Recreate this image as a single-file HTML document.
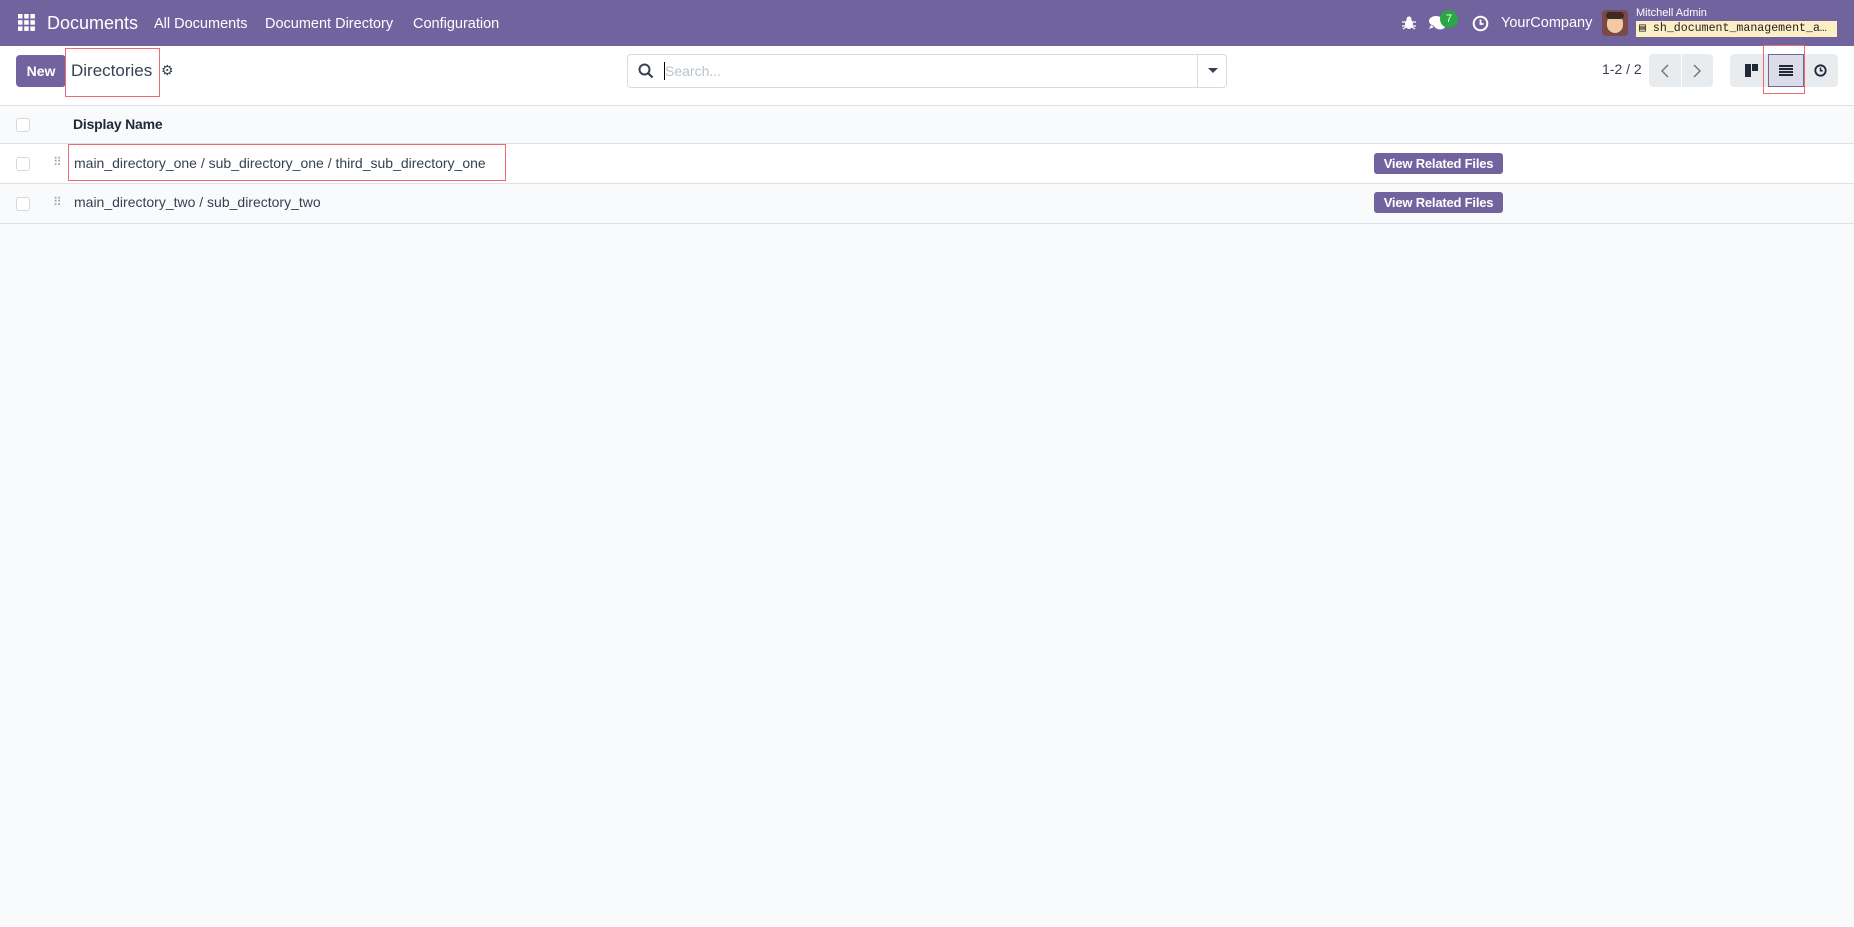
<!DOCTYPE html>
<html><head><meta charset="utf-8"><style>
*{box-sizing:border-box;margin:0;padding:0}
body{width:1854px;height:927px;background:#f9fafb;font-family:"Liberation Sans",sans-serif;color:#374151;position:relative;overflow:hidden}
.a{position:absolute;white-space:nowrap}
.nav{position:absolute;left:0;top:0;width:1854px;height:46px;background:#71639e}
.nav .a{color:#fff}
.cp{position:absolute;left:0;top:46px;width:1854px;height:60px;background:#fff;border-bottom:1px solid #dee2e6}
.row{position:absolute;left:0;width:1854px;border-bottom:1px solid #dee2e6}
.cb{position:absolute;left:16px;width:14px;height:14px;border:1px solid #d5d8dc;border-radius:3px;background:#fff}
.btn{position:absolute;left:1374px;width:129px;height:21px;background:#71639e;color:#fff;border-radius:3px;font-size:13px;font-weight:bold;text-align:center;line-height:21px;letter-spacing:-0.2px}
.red{position:absolute;border:1.5px solid #f06a6f}
</style></head><body>
<div class="nav">
 <svg class="a" style="left:18px;top:14px" width="17" height="17" viewBox="0 0 17 17" fill="#fff"><rect x="0" y="0" width="4.5" height="4.5"/><rect x="6.2" y="0" width="4.5" height="4.5"/><rect x="12.4" y="0" width="4.5" height="4.5"/><rect x="0" y="6.2" width="4.5" height="4.5"/><rect x="6.2" y="6.2" width="4.5" height="4.5"/><rect x="12.4" y="6.2" width="4.5" height="4.5"/><rect x="0" y="12.4" width="4.5" height="4.5"/><rect x="6.2" y="12.4" width="4.5" height="4.5"/><rect x="12.4" y="12.4" width="4.5" height="4.5"/></svg>
 <div class="a" style="left:47px;top:13px;font-size:18px">Documents</div>
 <div class="a" style="left:154px;top:16px;font-size:14.5px">All Documents</div>
 <div class="a" style="left:265px;top:16px;font-size:14.5px">Document Directory</div>
 <div class="a" style="left:413px;top:16px;font-size:14.5px">Configuration</div>
 <svg class="a" style="left:1402px;top:16px" width="14" height="14" viewBox="0 0 14 14" fill="#fff"><ellipse cx="7" cy="8" rx="4" ry="5"/><circle cx="7" cy="3" r="2.5"/><path d="M0 6h14M0 10h14M1 13l3-2M13 13l-3-2" stroke="#fff" stroke-width="1.3"/></svg>
 <svg class="a" style="left:1428px;top:15px" width="20" height="17" viewBox="0 0 20 17" fill="#fff"><ellipse cx="8" cy="6" rx="7" ry="5"/><ellipse cx="12" cy="10" rx="6" ry="4.5"/><path d="M3 10l-2 4 5-2z"/></svg>
 <div class="a" style="left:1440px;top:10px;width:18px;height:18px;border-radius:9px;background:#28a745;color:#fff;font-size:11px;text-align:center;line-height:18px">7</div>
 <svg class="a" style="left:1472px;top:15px" width="17" height="17" viewBox="0 0 17 17"><circle cx="8.5" cy="8.5" r="6.8" fill="none" stroke="#fff" stroke-width="2"/><path d="M8.5 4.5v4.5h3" fill="none" stroke="#fff" stroke-width="1.8"/></svg>
 <div class="a" style="left:1501px;top:15px;font-size:14.5px">YourCompany</div>
 <div class="a" style="left:1602px;top:10px;width:26px;height:26px;border-radius:4px;background:#7a4a4a"><div style="position:absolute;left:5px;top:5px;width:16px;height:18px;border-radius:8px;background:#f2c9a0"></div><div style="position:absolute;left:4px;top:2px;width:18px;height:7px;border-radius:4px;background:#3b2a26"></div></div>
 <div class="a" style="left:1636px;top:7px;font-size:11px">Mitchell Admin</div>
 <div class="a" style="left:1636px;top:21px;width:201px;height:16px;background:#fcefc5;color:#222;font-family:'Liberation Mono',monospace;font-size:11.6px;line-height:16px;padding-left:3px;overflow:hidden">▤ sh_document_management_a…</div>
</div>
<div class="cp">
 <div class="a" style="left:16px;top:9px;width:50px;height:32px;background:#71639e;color:#fff;border-radius:4px;font-size:14px;font-weight:bold;text-align:center;line-height:32px">New</div>
 <div class="a" style="left:71px;top:15px;font-size:17px;color:#374151">Directories</div>
 <div class="red" style="left:65px;top:2px;width:95px;height:49px"></div>
 <div class="a" style="left:161px;top:16px;font-size:14px;color:#374151">⚙</div>
 <div class="a" style="left:627px;top:8px;width:600px;height:34px;border:1px solid #d8dadd;border-radius:4px;background:#fff">
  <svg class="a" style="left:10px;top:8px" width="16" height="16" viewBox="0 0 16 16"><circle cx="6.5" cy="6.5" r="5" fill="none" stroke="#374151" stroke-width="2"/><path d="M10 10l4.5 4.5" stroke="#374151" stroke-width="2.2"/></svg>
  <div class="a" style="left:36px;top:7px;width:1px;height:18px;background:#000"></div>
  <div class="a" style="left:37px;top:8px;font-size:14px;color:#b9c2cc">Search...</div>
  <div class="a" style="left:569px;top:0;width:1px;height:32px;background:#d8dadd"></div>
  <div class="a" style="left:580px;top:13px;width:0;height:0;border-left:5px solid transparent;border-right:5px solid transparent;border-top:5px solid #374151"></div>
 </div>
 <div class="a" style="left:1602px;top:15px;font-size:14px;color:#374151">1-2 / 2</div>
 <div class="a" style="left:1649px;top:8px;width:64px;height:33px;background:#e9ecef;border-radius:4px"><div class="a" style="left:32px;top:0;width:1px;height:33px;background:#fff"></div>
  <svg class="a" style="left:11px;top:10px" width="10" height="14" viewBox="0 0 10 14"><path d="M8 1L2 7l6 6" fill="none" stroke="#6b7280" stroke-width="1.4"/></svg>
  <svg class="a" style="left:43px;top:10px" width="10" height="14" viewBox="0 0 10 14"><path d="M2 1l6 6-6 6" fill="none" stroke="#6b7280" stroke-width="1.4"/></svg></div>
 <div class="a" style="left:1730px;top:8px;width:108px;height:33px;background:#e9ecef;border-radius:4px">
  <div class="a" style="left:15px;top:10px;width:6px;height:13px;background:#1f2937"></div><div class="a" style="left:22px;top:10px;width:6px;height:7px;background:#1f2937"></div>
  <div class="a" style="left:38px;top:0;width:36px;height:33px;background:#dcdbe8;border:1px solid #71639e"></div>
  <svg class="a" style="left:49px;top:11px" width="14" height="11" viewBox="0 0 14 11" fill="#1f2937"><rect y="0" width="14" height="2"/><rect y="3" width="14" height="2"/><rect y="6" width="14" height="2"/><rect y="9" width="14" height="2"/></svg>
  <svg class="a" style="left:84px;top:10px" width="13" height="13" viewBox="0 0 13 13"><circle cx="6.5" cy="6.5" r="5.2" fill="none" stroke="#1f2937" stroke-width="1.8"/><path d="M6.5 3.5v3.3h2.3" fill="none" stroke="#1f2937" stroke-width="1.5"/></svg>
 </div>
 <div class="red" style="left:1763px;top:-1px;width:42px;height:49px"></div>
</div>
<div class="row" style="top:106px;height:38px;background:#f9fafb"><div class="cb" style="top:12px"></div><div class="a" style="left:73px;top:10px;font-size:14px;font-weight:bold;color:#1f2937;letter-spacing:-0.2px">Display Name</div></div>
<div class="row" style="top:144px;height:40px;background:#fff"><div class="cb" style="top:13px"></div><div class="a" style="left:53px;top:11px;font-size:12px;color:#9ca3af;letter-spacing:-1px">⠿</div><div class="a" style="left:74px;top:11px;font-size:14px">main_directory_one / sub_directory_one / third_sub_directory_one</div><div class="btn" style="top:9px">View Related Files</div></div>
<div class="red" style="left:68px;top:144px;width:438px;height:37px"></div>
<div class="row" style="top:184px;height:40px;background:#f9fafb"><div class="cb" style="top:13px"></div><div class="a" style="left:53px;top:11px;font-size:12px;color:#9ca3af;letter-spacing:-1px">⠿</div><div class="a" style="left:74px;top:10px;font-size:14px">main_directory_two / sub_directory_two</div><div class="btn" style="top:8px">View Related Files</div></div>
</body></html>
